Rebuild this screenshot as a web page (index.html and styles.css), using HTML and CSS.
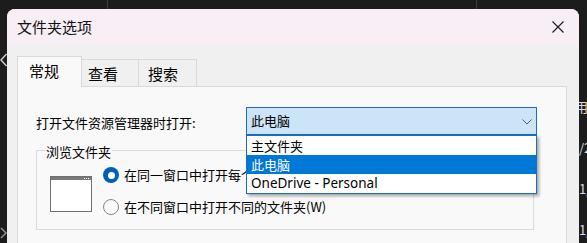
FILE: index.html
```html
<!DOCTYPE html>
<html lang="zh-CN">
<head>
<meta charset="utf-8">
<title>文件夹选项</title>
<link rel="stylesheet" href="styles.css">
</head>
<body>
  <div class="bg-toolbar">
    <svg class="tb-circle" width="16" height="16" viewBox="0 0 16 16"><circle cx="8" cy="9" r="6.5" fill="none" stroke="#d6d6d6" stroke-width="1.2"/></svg>
    <span class="tb-text">新建</span>
    <span class="tb-sep sep1"></span>
    <svg class="tb-cut" width="20" height="16" viewBox="0 0 20 16"><circle cx="5" cy="11" r="3.6" fill="none" stroke="#3f8fd0" stroke-width="1.3"/><circle cx="14" cy="11" r="3.6" fill="none" stroke="#3f8fd0" stroke-width="1.3"/></svg>
    <svg class="tb-arc" width="12" height="16" viewBox="0 0 12 16"><path d="M1 10 A5 5 0 0 0 11 12" fill="none" stroke="#bdbdbd" stroke-width="1.2"/></svg>
    <svg class="tb-paste" width="20" height="16" viewBox="0 0 20 16"><rect x="1" y="2" width="9" height="13" rx="2" fill="none" stroke="#9a9a9a" stroke-width="1.2"/><rect x="10" y="4" width="8" height="11" rx="1.5" fill="none" stroke="#3f8fd0" stroke-width="1.2"/></svg>
    <svg class="tb-monitor" width="18" height="16" viewBox="0 0 18 16"><rect x="1" y="1" width="16" height="12" rx="2" fill="none" stroke="#bdbdbd" stroke-width="1.2"/><path d="M6 15.3 H12 M9 13 V15.3" stroke="#3f8fd0" stroke-width="1.4"/></svg>
    <svg class="tb-share" width="18" height="16" viewBox="0 0 18 16"><rect x="1" y="1" width="16" height="14" rx="3" fill="none" stroke="#bdbdbd" stroke-width="1.2"/></svg>
    <svg class="tb-del" width="14" height="16" viewBox="0 0 14 16"><rect x="1" y="1" width="12" height="14" rx="3" fill="none" stroke="#bdbdbd" stroke-width="1.2"/></svg>
    <span class="tb-sep sep2"></span>
    <span class="tb-arrow">↑</span>
    <svg class="tb-diamond" width="8" height="16" viewBox="0 0 8 16"><path d="M4 9 L7.5 12.5 L4 16 L0.5 12.5 Z" fill="#3f8fd0"/></svg>
    <span class="tb-text sort">排序</span>
  </div>

  <div class="bg-left">
    <svg class="chev-l" width="8" height="14" viewBox="0 0 8 14"><path d="M6.5 1 L1 7 L6.5 13" fill="none" stroke="#d0d0d0" stroke-width="1.4"/></svg>
    <svg class="chev-r" width="8" height="12" viewBox="0 0 8 12"><path d="M1 1 L6 6 L1 11" fill="none" stroke="#9a9a9a" stroke-width="1.4"/></svg>
  </div>

  <div class="bg-right">
    <span class="frag f1">用</span>
    <span class="frag">/2</span>
    <span class="frag">1/</span>
    <span class="frag">1/</span>
  </div>

  <div class="dialog">
    <div class="titlebar">
      <span class="title">文件夹选项</span>
      <svg class="close" width="12" height="12" viewBox="0 0 12 12"><path d="M0.5 0.5 L11.5 11.5 M11.5 0.5 L0.5 11.5" stroke="#1b1b1b" stroke-width="1.1"/></svg>
    </div>
    <div class="dlg-body">
      <div class="tabs">
        <div class="tab active">常规</div>
        <div class="tab t2">查看</div>
        <div class="tab t3">搜索</div>
      </div>
      <div class="panel">
        <div class="open-row">
          <span class="open-label">打开文件资源管理器时打开:</span>
          <div class="combo">
            <span class="combo-value">此电脑</span>
            <svg class="chevron" width="10" height="6" viewBox="0 0 10 6"><path d="M0.5 0.5 L5 5 L9.5 0.5" fill="none" stroke="#5a5a5a" stroke-width="1"/></svg>
            <ul class="dropdown">
              <li class="opt">主文件夹</li>
              <li class="opt selected">此电脑</li>
              <li class="opt latin">OneDrive - Personal</li>
            </ul>
          </div>
        </div>
        <div class="group">
          <span class="legend">浏览文件夹</span>
          <div class="group-content">
            <div class="win-icon">
              <div class="win-bar"><i></i><i></i><i></i></div>
            </div>
            <div class="radios">
              <div class="radio-row"><span class="radio checked"></span><span class="radio-label">在同一窗口中打开每个文件夹(O)</span></div>
              <div class="radio-row"><span class="radio"></span><span class="radio-label">在不同窗口中打开不同的文件夹(W)</span></div>
            </div>
          </div>
        </div>
      </div>
    </div>
  </div>
</body>
</html>
```

FILE: styles.css
```css
* { box-sizing: border-box; margin: 0; padding: 0; }

html, body {
  width: 587px;
  height: 243px;
  overflow: hidden;
}

body {
  position: relative;
  background: #1c1c1c;
  font-family: "Noto Sans CJK SC", "Segoe UI", "Noto Sans", sans-serif;
  color: #000;
}

/* ---------- background window fragments ---------- */
.bg-toolbar {
  position: absolute;
  left: 0;
  top: -16px;
  width: 587px;
  height: 25px;
  display: flex;
  align-items: flex-start;
  color: #f0f0f0;
}
.tb-circle { margin-left: 5px; }
.tb-text { margin-left: 12px; font-size: 14px; line-height: 16px; color: #f2f2f2; }
.tb-sep { width: 1px; height: 25px; background: #3a3a3a; }
.sep1 { margin-left: 46px; }
.tb-cut { margin-left: 23px; }
.tb-arc { margin-left: 41px; }
.tb-paste { margin-left: 49px; }
.tb-monitor { margin-left: 42px; }
.tb-share { margin-left: 40px; }
.tb-del { margin-left: 45px; }
.sep2 { margin-left: 26px; }
.tb-arrow { margin-left: 23px; font-size: 13px; line-height: 16px; color: #e8e8e8; }
.tb-diamond { margin-left: 1px; }
.tb-text.sort { margin-left: 7px; }

.bg-left {
  position: absolute;
  left: 0;
  top: 53px;
  width: 7px;
  display: flex;
  flex-direction: column;
}
.chev-r { margin-top: 160px; }

.bg-right {
  position: absolute;
  left: 572px;
  top: 98px;
  display: flex;
  flex-direction: column;
  gap: 23px;
  font-size: 13px;
  line-height: 18px;
  color: #dcdcdc;
}
.frag { margin-left: 7px; }
.frag.f1 { margin-left: 3px; }

/* ---------- dialog ---------- */
.dialog {
  position: relative;
  z-index: 1;
  margin: 9px 0 0 7px;
  width: 572px;
  height: 240px;
  background: #f0f0f0;
  border-radius: 8px 8px 0 0;
  overflow: hidden;
}

.titlebar {
  height: 36px;
  background: #f8eef5;
  display: flex;
  align-items: center;
  justify-content: space-between;
  padding: 0 15px 0 10px;
}
.title {
  font-size: 15px;
  line-height: 20px;
  color: #111;
}

.dlg-body {
  padding: 11px 0 0 10px;
}

.tabs {
  display: flex;
  align-items: flex-end;
  height: 30px;
}
.tab {
  height: 27px;
  border: 1px solid #d9d9d9;
  border-left: none;
  border-bottom: none;
  background: #f0f0f0;
  font-size: 15px;
  line-height: 24px;
  padding-top: 2px;
  color: #000;
}
.tab.active {
  width: 65px;
  height: 31px;
  margin-bottom: -1px;
  border-left: 1px solid #d9d9d9;
  background: #f9f9f9;
  position: relative;
  z-index: 2;
  padding: 0 0 0 11px;
  line-height: 28px;
}
.tab.t2 { width: 57px; padding-left: 6px; }
.tab.t3 { width: 58px; padding-left: 9px; }

.panel {
  width: 550px;
  height: 170px;
  background: #f9f9f9;
  border: 1px solid #d9d9d9;
  padding: 20px 0 0 18px;
}

.open-row {
  display: flex;
  align-items: flex-start;
}
.open-label {
  width: 210px;
  margin-top: 7px;
  font-size: 13px;
  line-height: 18px;
}

.combo {
  position: relative;
  z-index: 3;
  width: 291px;
  height: 28px;
  border: 1px solid #1a6dc0;
  background: #cce4f7;
  display: flex;
  align-items: center;
  justify-content: space-between;
  padding: 0 4px 0 4px;
}
.combo-value {
  font-size: 13px;
  line-height: 18px;
}
.chevron { margin-top: 1px; }

.dropdown {
  position: absolute;
  top: 27px;
  left: -1px;
  width: 291px;
  height: 59px;
  list-style: none;
  background: #fff;
  border: 1px solid #1a6dc0;
  box-shadow: 2px 2px 3px rgba(0, 0, 0, 0.35);
}
.opt {
  height: 19px;
  line-height: 19px;
  padding-left: 4px;
  font-size: 13px;
  color: #000;
}
.opt.selected {
  background: #0078d7;
  color: #fff;
}
.opt.latin {
  font-family: "Noto Sans", "Noto Sans CJK SC", sans-serif;
  font-size: 13.5px;
}

.group {
  margin-top: 15px;
  width: 498px;
  height: 80px;
  border: 1px solid #dcdcdc;
}
.legend {
  display: block;
  width: fit-content;
  margin: -8px 0 0 8px;
  padding: 0 1px;
  background: #f9f9f9;
  font-size: 13px;
  line-height: 18px;
}
.group-content {
  display: flex;
  align-items: flex-start;
}
.win-icon {
  margin: 15px 0 0 13px;
  width: 42px;
  height: 36px;
  border: 1px solid #6f6f6f;
  background: #fff;
}
.win-bar {
  height: 3px;
  background: #7a7a7a;
  display: flex;
  justify-content: flex-end;
  align-items: center;
  gap: 1px;
  padding-right: 2px;
}
.win-bar i {
  display: block;
  width: 1px;
  height: 1px;
  background: #fff;
}

.radios {
  margin: 4px 0 0 11px;
  display: flex;
  flex-direction: column;
  gap: 12px;
}
.radio-row {
  display: flex;
  align-items: center;
  height: 20px;
  gap: 5px;
  white-space: nowrap;
}
.radio {
  width: 16px;
  height: 16px;
  border-radius: 50%;
  border: 1px solid #858585;
  background: #fbfbfb;
  display: flex;
  align-items: center;
  justify-content: center;
}
.radio.checked {
  border: none;
  background: #005fb8;
}
.radio.checked::after {
  content: "";
  width: 7px;
  height: 7px;
  border-radius: 50%;
  background: #fff;
}
.radio-label {
  font-size: 13px;
  line-height: 18px;
}
```
